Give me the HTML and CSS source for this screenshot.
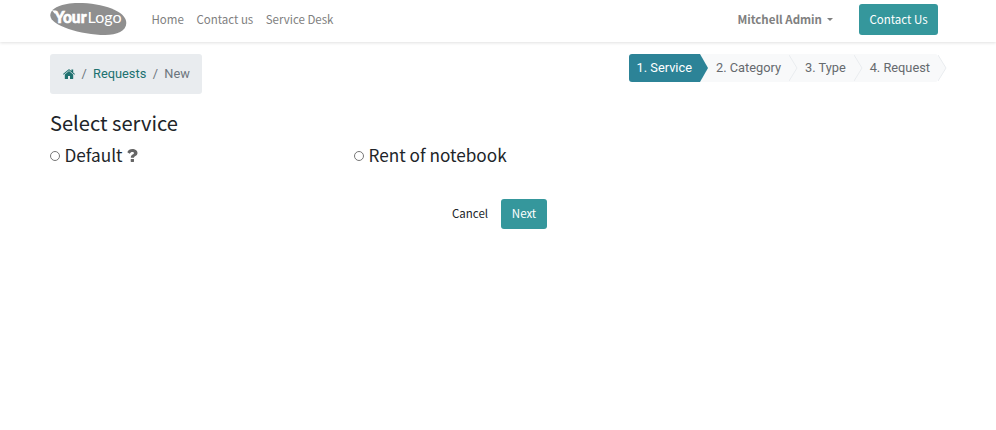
FILE: index.html
```html
<!DOCTYPE html>
<html lang="en">
<head>
<meta charset="utf-8">
<title>Service Desk</title>
<link rel="stylesheet" href="styles.css">
</head>
<body>
<header class="navbar">
  <a class="logo" aria-label="YourLogo">
    <svg width="77" height="34" viewBox="0 0 77 34">
      <path d="M0.3 12.5C0.3 5 12 0 28 0C53 0 76.3 8 76.3 20C76.3 28 67 32 55 32C31 32 0.3 22.5 0.3 12.5Z" fill="#8f8f8f"/>
      <path d="M2 7.2L6 7.8L7.5 10L4.5 10.4Z" fill="#fff"/>
      <text class="logo-bold" x="4.5" y="20.3" textLength="32" lengthAdjust="spacingAndGlyphs">Your</text>
      <text class="logo-light" x="37.5" y="20.3" textLength="34" lengthAdjust="spacingAndGlyphs">Logo</text>
    </svg>
  </a>
  <nav class="menu">
    <a>Home</a>
    <a>Contact us</a>
    <a>Service Desk</a>
  </nav>
  <a class="user">Mitchell Admin<span class="caret"></span></a>
  <a class="btn btn-contact">Contact Us</a>
</header>
<main class="content">
  <div class="topline">
    <div class="breadcrumb">
      <svg class="home" width="12" height="10" viewBox="0 0 12 10">
        <path d="M6 2.1L10.2 5.6V9.4Q10.2 9.9 9.7 9.9H7V6.9H5V9.9H2.3Q1.8 9.9 1.8 9.4V5.6Z"/>
        <path d="M0 5.1L5.4 .5Q6 0 6.6 .5L8.4 2V.5H10.2V3.5L12 5.1L11.4 5.8L6 1.3L.6 5.8Z"/>
      </svg>
      <span class="sep">/</span>
      <a class="crumb">Requests</a>
      <span class="sep">/</span>
      <span class="current">New</span>
    </div>
    <div class="steps">
      <div class="step active">1. Service<svg class="tip" width="9" height="28" viewBox="0 0 9 28"><path d="M0 0L8 14L0 28"/></svg></div>
      <div class="step">2. Category<svg class="tip" width="9" height="28" viewBox="0 0 9 28"><path d="M0 1L8 14L0 27"/></svg></div>
      <div class="step">3. Type<svg class="tip" width="9" height="28" viewBox="0 0 9 28"><path d="M0 1L8 14L0 27"/></svg></div>
      <div class="step last">4. Request<svg class="tip" width="9" height="28" viewBox="0 0 9 28"><path d="M0 1L8 14L0 27"/></svg></div>
    </div>
  </div>
  <h3 class="title">Select service</h3>
  <div class="options">
    <label class="option"><input type="radio" name="service"><span>Default</span><svg class="help" width="11" height="13" viewBox="0 0 11 13"><path d="M.3 3.2C1.3 1.1 3 0 5.3 0C8.2 0 10.5 1.6 10.5 4C10.5 5.6 9.5 6.4 8.4 7.1C7.4 7.7 7 8 7 8.8H3.8C3.8 7 4.5 6.3 5.6 5.6C6.5 5 7 4.7 7 4C7 3.3 6.3 2.9 5.3 2.9C4.1 2.9 3.5 3.4 2.7 4.7Z"/><rect x="3.7" y="9.9" width="3.3" height="3.1" rx=".4"/></svg></label>
    <label class="option"><input type="radio" name="service"><span>Rent of notebook</span></label>
  </div>
  <div class="actions">
    <a class="cancel">Cancel</a>
    <a class="btn btn-next">Next</a>
  </div>
</main>
</body>
</html>
```

FILE: styles.css
```css
* { box-sizing: border-box; }

body {
  margin: 0;
  background: #fff;
  color: #212529;
  font-family: "Noto Sans CJK SC", "Noto Sans", sans-serif;
  font-size: 11.5px;
  line-height: 20px;
}

.navbar {
  display: flex;
  align-items: flex-start;
  height: 42px;
  padding: 4px 58px 0 50px;
  box-shadow: 0 1px 3px rgba(0, 0, 0, .12);
  color: #808080;
}

.logo { width: 77px; margin-top: -1px; }
.logo svg { display: block; }
.logo-bold { font: 900 16px Lato, sans-serif; fill: #fff; stroke: #fff; stroke-width: .6px; }
.logo-light { font: 400 16px Lato, sans-serif; fill: #fff; }

.menu { display: flex; gap: 12.5px; margin: 5px 0 0 24.5px; }

.user {
  display: flex;
  align-items: center;
  margin: 5px 26px 0 auto;
  font-weight: 700;
}

.caret {
  margin-left: 5px;
  border: 3px solid transparent;
  border-top-color: #808080;
  border-bottom: 0;
}

.btn {
  background: #35979c;
  color: #fff;
  border-radius: 3px;
  text-align: center;
}

.btn-contact { width: 79px; height: 31px; line-height: 30px; }

.content { padding: 12px 50px 0; }

.topline {
  display: flex;
  justify-content: space-between;
  align-items: flex-start;
  font-family: Roboto, sans-serif;
  font-size: 12.8px;
}

.breadcrumb {
  display: flex;
  align-items: center;
  width: 152px;
  height: 40px;
  padding: 0 13px;
  border-radius: 3px;
  background: #e9ecef;
  color: #6c757d;
}

.home { flex: none; fill: #20716f; }
.sep { margin: 0 6.4px; }
.crumb { color: #20716f; }

.steps { display: flex; height: 28px; line-height: 28px; margin-right: 8px; }

.step {
  position: relative;
  padding: 0 8px 0 16px;
  background: #f8f9fa;
  color: #666a6e;
}

.step.active {
  padding-left: 8px;
  background: #2c8397;
  color: #fff;
  border-radius: 3px 0 0 3px;
}

.step.last { border-radius: 0 3px 3px 0; }

.tip {
  position: absolute;
  left: 100%;
  top: 0;
  z-index: 1;
  fill: #f8f9fa;
  stroke: #e9ecef;
}

.active .tip { fill: #2c8397; stroke: none; }

.title {
  margin: 13px 0 0;
  font-size: 20.1px;
  font-weight: 400;
  line-height: 32px;
}

.options {
  display: grid;
  grid-template-columns: 304px 1fr;
  font-size: 17.2px;
  line-height: 30px;
}

.option { display: flex; align-items: center; height: 32px; }

.option input {
  appearance: none;
  width: 10px;
  height: 10px;
  margin: 1px 4.5px 0 0;
  border: 1px solid #767676;
  border-radius: 50%;
}

.help { margin-left: 4px; fill: #666; }

.actions {
  display: flex;
  justify-content: center;
  gap: 13px;
  margin: 28px 0 0 3px;
  line-height: 29px;
}

.btn-next { width: 46px; height: 30px; }
```
